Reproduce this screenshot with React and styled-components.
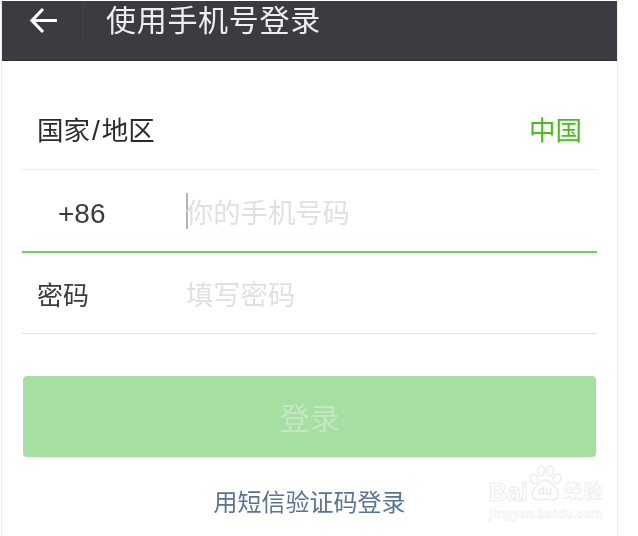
import styled, { createGlobalStyle, css } from "styled-components";

const GlobalStyle = createGlobalStyle`
  html, body {
    margin: 0;
    padding: 0;
    background: #fff;
  }
  body {
    font-family: "Liberation Sans", "Noto Sans CJK SC", sans-serif;
  }
`;

// the reference is a scaled-up photo, so its text is a little soft
const soft = css`
  filter: blur(0.4px);
`;

const Page = styled.div`
  position: relative;
  width: 638px;
  height: 536px;
  overflow: hidden;
  background: #fff;
  padding-top: 1px;
  box-sizing: border-box;
`;

const Phone = styled.div`
  width: 617px;
  height: 535px;
  margin-left: 1px;
  box-sizing: border-box;
  border-left: 1px solid #eeeeee;
  border-right: 1px solid #eeeeee;
`;

const Header = styled.header`
  height: 60px;
  box-sizing: border-box;
  background: #3b3c41;
  border-bottom: 1px solid #2f3034;
  display: flex;
  align-items: flex-start;
`;

const BackButton = styled.div`
  width: 82px;
  height: 39px;
  box-sizing: border-box;
  border-right: 1px solid #45464b;
  padding: 6px 0 0 27px;
  color: #fff;
  display: flex;
`;

const Title = styled.h1`
  ${soft}
  margin: 1px 0 0 22px;
  font-size: 30px;
  line-height: 38px;
  font-weight: 400;
  color: #eeeeef;
  letter-spacing: 0.7px;
`;

const Form = styled.div`
  padding: 33px 20px 0 20px;
`;

const Row = styled.div`
  height: ${(p) => p.$height}px;
  box-sizing: border-box;
  padding-bottom: ${(p) => p.$lift || 0}px;
  display: flex;
  align-items: center;
  border-bottom: ${(p) => p.$weight || 1}px solid ${(p) => p.$line};
  font-size: 26px;
  color: #333;
`;

const RegionLabel = styled.span`
  ${soft}
  margin-left: 15px;
  font-size: 26.5px;
  color: #2a2a2a;
`;

const Slash = styled.span`
  padding: 0 2px;
  font-size: 28px;
`;

const RegionValue = styled.span`
  ${soft}
  margin-left: auto;
  margin-right: 15px;
  font-size: 26.5px;
  color: #45c01a;
`;

const Label = styled.span`
  ${soft}
  width: 164px;
  flex: none;
  box-sizing: border-box;
  padding-left: ${(p) => p.$indent}px;
  padding-top: ${(p) => p.$drop || 0}px;
  color: #3c3c3c;
`;

const PhoneCode = styled.span`
  font-size: 28px;
`;

const Placeholder = styled.span`
  ${soft}
  font-size: 27.3px;
  color: #e0e0e0;
`;

const Caret = styled.span`
  width: 2px;
  height: 36px;
  margin-right: -2px;
  background: #b4b4b8;
`;

const SubmitButton = styled.button`
  display: block;
  width: 573px;
  height: 81px;
  margin: 42px 0 0 1px;
  padding: 0 0 2px;
  border: 0;
  border-radius: 4px;
  background: #a5dfa2;
  color: #c3e8c1;
  font: inherit;
  font-size: 30px;
`;

const SmsLink = styled.div`
  ${soft}
  margin-top: 28px;
  text-align: center;
  font-size: 24px;
  line-height: 36px;
  color: #5c7299;
`;

const Watermark = styled.div`
  position: absolute;
  left: 489px;
  top: 466px;
  width: 118px;
  height: 60px;
  color: #fff;
  -webkit-text-stroke: 1px #ebebeb;
  ${soft}
`;

const Brand = styled.div`
  display: flex;
  align-items: center;
  font-size: 25px;
  font-weight: 700;
  line-height: 30px;
  padding-top: 11px;
`;

const Paw = styled.svg`
  width: 38px;
  height: 38px;
  margin: -16px -1px 0 -2px;
  flex: none;
  color: #ebebeb;
`;

const BrandCn = styled.span`
  font-size: 20px;
  font-weight: 400;
  -webkit-text-stroke: 0.6px #ebebeb;
`;

const Domain = styled.div`
  font-size: 13px;
  line-height: 16px;
  font-weight: 700;
  margin-top: -1px;
  -webkit-text-stroke: 0.5px #ebebeb;
`;

const App = () => {
  return (
    <>
      <GlobalStyle />
      <Page>
        <Phone>
          <Header>
            <BackButton>
              <svg width="29" height="27" viewBox="0 0 29 27" fill="none">
                <path
                  d="M14 2 L3 13.5 L14 25 M3 13.5 H28"
                  stroke="currentColor"
                  strokeWidth="3.2"
                />
              </svg>
            </BackButton>
            <Title>使用手机号登录</Title>
          </Header>
          <Form>
            <Row $height={76} $line="#ececec" $lift={6}>
              <RegionLabel>
                国家<Slash>/</Slash>地区
              </RegionLabel>
              <RegionValue>中国</RegionValue>
            </Row>
            <Row $height={83} $line="#78cf60" $weight={2}>
              <Label $indent={36} $drop={6}>
                <PhoneCode>+86</PhoneCode>
              </Label>
              <Caret />
              <Placeholder>你的手机号码</Placeholder>
            </Row>
            <Row $height={81} $line="#e2e2e2">
              <Label $indent={15}>密码</Label>
              <Placeholder>填写密码</Placeholder>
            </Row>
            <SubmitButton type="button">登录</SubmitButton>
            <SmsLink>用短信验证码登录</SmsLink>
          </Form>
        </Phone>
        <Watermark>
          <Brand>
            Bai
            <Paw viewBox="0 0 38 38" fill="none" stroke="currentColor" strokeWidth="1.4">
              <ellipse cx="8" cy="14" rx="3.6" ry="5" transform="rotate(-25 8 14)" />
              <ellipse cx="15" cy="6" rx="3.4" ry="5" />
              <ellipse cx="24" cy="6" rx="3.4" ry="5" />
              <ellipse cx="31" cy="14" rx="3.6" ry="5" transform="rotate(25 31 14)" />
              <path d="M19 15 C14 15 13 20 9 23 C4 27 6 35 13 35 C16 35 17 34 19 34 C21 34 23 35 26 35 C33 35 34 27 30 23 C26 20 24 15 19 15 Z" />
              <text x="19" y="30" fontSize="12" fontWeight="700" textAnchor="middle" fill="currentColor" stroke="none">du</text>
            </Paw>
            <BrandCn>经验</BrandCn>
          </Brand>
          <Domain>jingyan.baidu.com</Domain>
        </Watermark>
      </Page>
    </>
  );
};

export default App;
